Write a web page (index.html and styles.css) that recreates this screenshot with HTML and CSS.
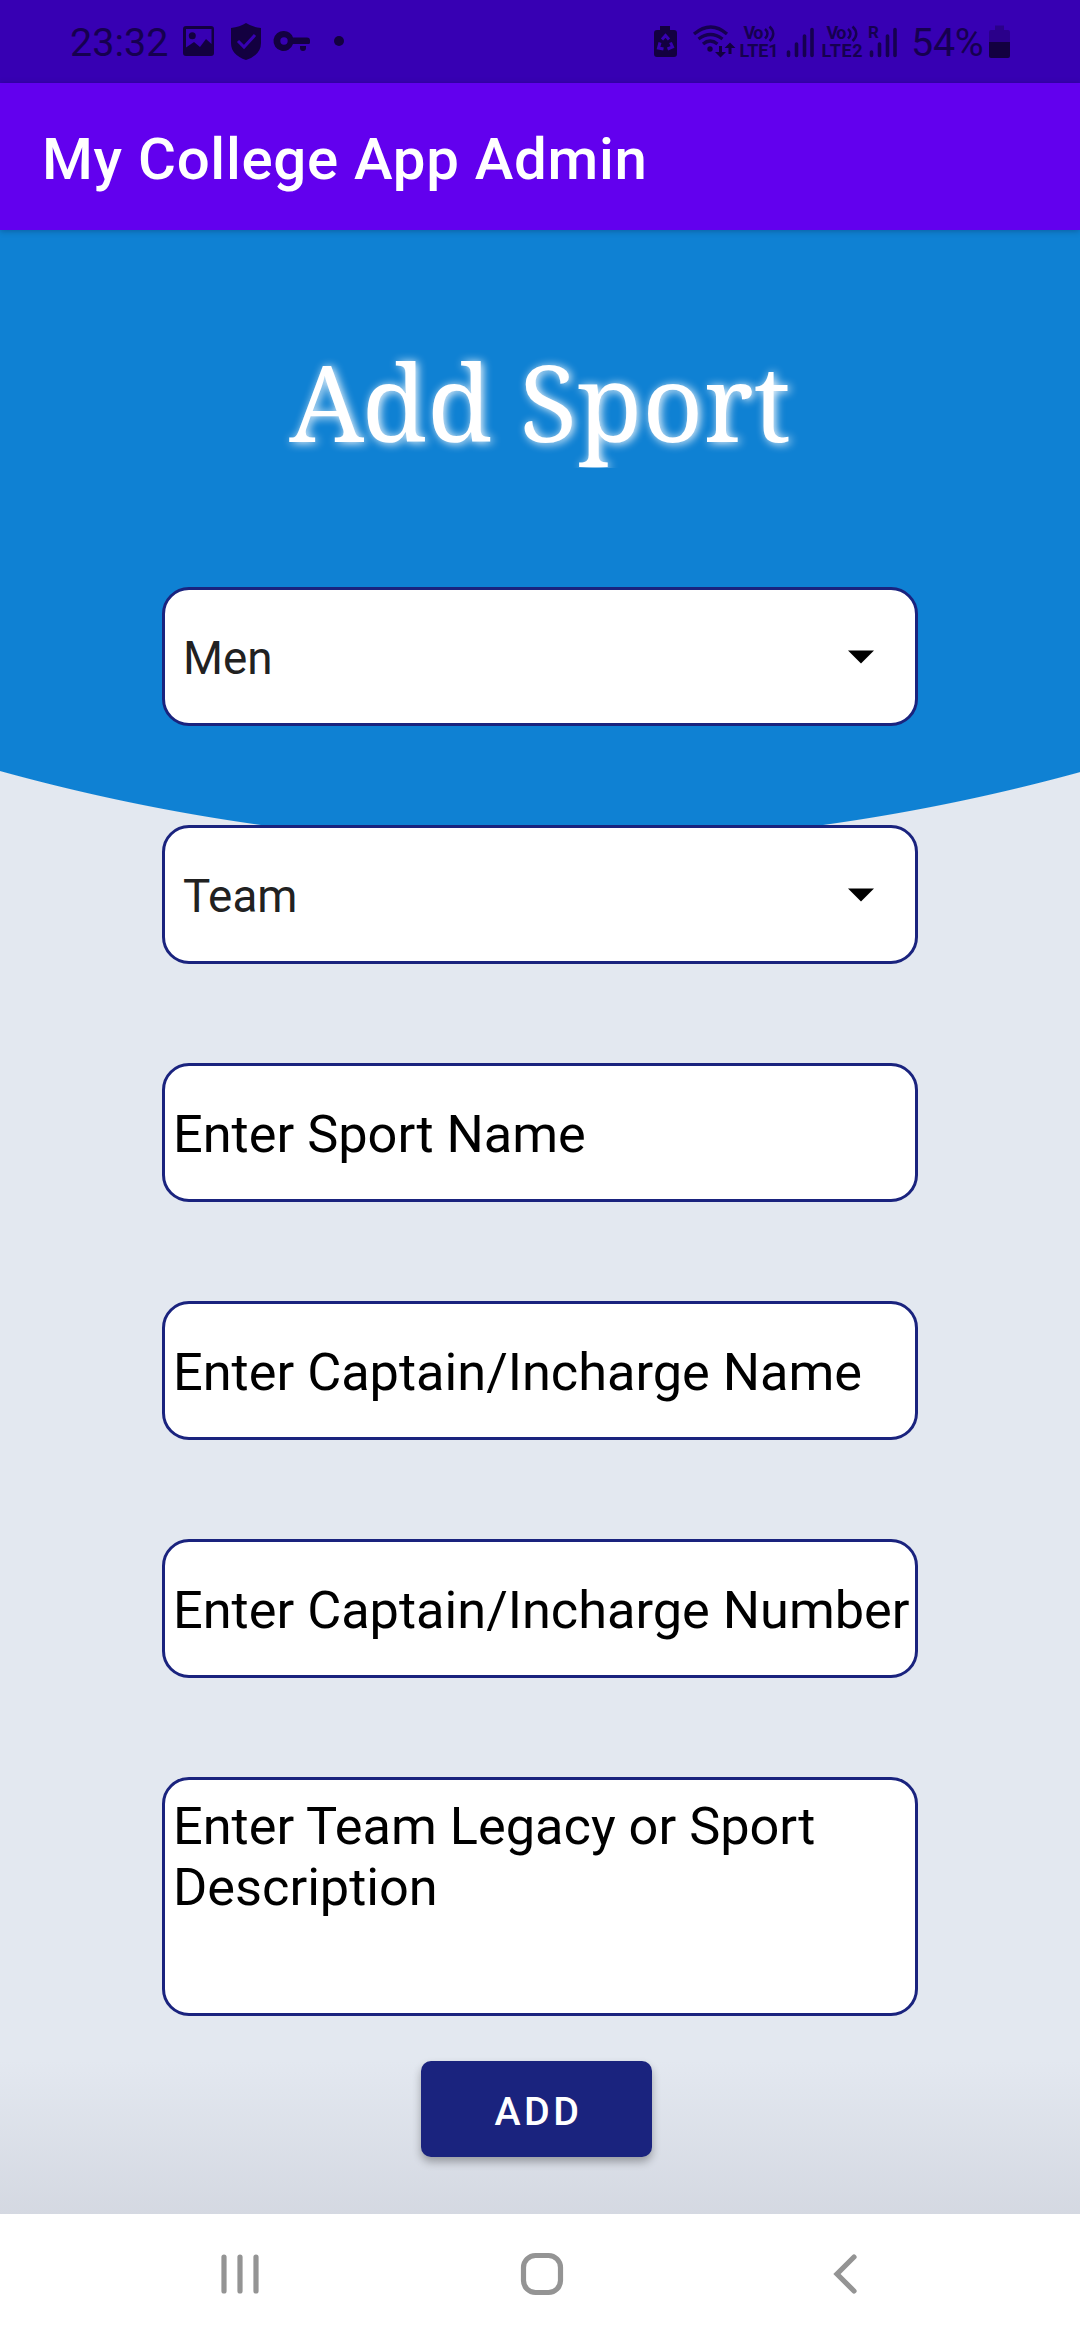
FILE: index.html
```html
<!DOCTYPE html>
<html lang="en">
<head>
<meta charset="utf-8">
<title>My College App Admin</title>
<link rel="stylesheet" href="styles.css">
</head>
<body>
<header class="status">
  <div class="status-group">
    <span class="status-text">23:32</span>
    <svg class="status-icons" width="168" height="83" viewBox="180 0 168 83">
      <path fill-rule="evenodd" d="M186 26h25q3 0 3 3v24q0 3-3 3h-25q-3 0-3-3V29q0-3 3-3zm0 3v18.500l8-5.500 6 5 6-8 5.500 5V29z"/>
      <circle cx="192.300" cy="35.800" r="3.500"/>
      <path d="M246 23q6 4 15 5v15q0 12-15 17q-15-5-15-17V28q9-1 15-5z"/>
      <path class="cut" d="M238 41l6 6 11-12"/>
      <path fill-rule="evenodd" d="M284 31a10 10 0 0 1 9 6.500h14a3 3 0 0 1 3 3v2q0 1.500-1.500 1.500H293a10 10 0 1 1-9-13zm0 6.300a3.700 3.700 0 1 0 0 7.400 3.700 3.700 0 0 0 0-7.400z"/>
      <path d="M300 46h6v2q0 3-3 3t-3-3z"/>
      <circle cx="339" cy="41" r="5"/>
    </svg>
  </div>
  <div class="status-group">
    <svg class="status-icons" width="252" height="83" viewBox="650 0 252 83">
      <path d="M660 26h10v4h4q3 0 3 3v21q0 3-3 3h-17q-3 0-3-3V33q0-3 3-3h3z"/>
      <path class="recycle" d="M662 39.500l3.500-4 3.500 4M670.500 42.500l2 4.500-5 2M663.500 49l-5-1 1.500-5.500"/>
      <g class="wave"><path d="M694 34q17-14 33 0M698.500 39q12-9 24 0M703 44q7-6 14.500 0"/></g>
      <circle cx="710" cy="49" r="2.700"/>
      <path d="M719 46h3v6h4l-5.500 5.500L715 52h4zM728.500 54h3v-6h4L730 42.500 724.500 48h4z"/>
      <text class="net" x="743.500" y="39" textLength="20">Vo</text>
      <path class="sound" d="M765 29q5 4.500 0 9.500M769.500 26.500q7.500 7 0 14.500"/>
      <text class="net" x="739.500" y="57" textLength="39">LTE1</text>
      <path class="bar" d="M788.500 52v3.500M796.500 44v11.500M804.500 36v19.500M812 29.500v26"/>
      <text class="net" x="826.500" y="39" textLength="20">Vo</text>
      <path class="sound" d="M848 29q5 4.500 0 9.500M852.500 26.500q7.500 7 0 14.500"/>
      <text class="net" x="821.500" y="57" textLength="41">LTE2</text>
      <text class="net roam" x="868" y="38">R</text>
      <path class="bar" d="M871.500 52v3.500M879.500 44v11.500M887.500 36v19.500M895 29.500v26"/>
    </svg>
    <span class="status-text percent">54%</span>
    <svg class="status-icons" width="24" height="83" viewBox="988 0 24 83">
      <path opacity=".35" d="M995 25.500h9V30h4q2 0 2 2v10h-21V32q0-2 2-2h4z"/>
      <path d="M989 42h21v14q0 2-2 2h-17q-2 0-2-2z"/>
    </svg>
  </div>
</header>
<div class="appbar">My College App Admin</div>
<main class="page">
  <h1 class="title">Add Sport</h1>
  <form class="form">
    <div class="field select"><span>Men</span><svg width="26" height="14" viewBox="0 0 26 14"><path d="M0 .5h26L13 13.500z"/></svg></div>
    <div class="field select"><span>Team</span><svg width="26" height="14" viewBox="0 0 26 14"><path d="M0 .5h26L13 13.500z"/></svg></div>
    <div class="field">Enter Sport Name</div>
    <div class="field">Enter Captain/Incharge Name</div>
    <div class="field">Enter Captain/Incharge Number</div>
    <div class="field area">Enter Team Legacy or Sport Description</div>
  </form>
  <button class="add" type="button">ADD</button>
</main>
<nav class="nav">
  <svg width="40" height="44" viewBox="0 0 40 44"><path d="M4 5v34M20 5v34M36 5v34"/></svg>
  <svg class="home" width="44" height="44" viewBox="0 0 44 44"><rect x="3.500" y="3.500" width="37" height="37" rx="12"/></svg>
  <svg width="24" height="44" viewBox="0 0 24 44"><path d="M21 5L4 22l17 17"/></svg>
</nav>
</body>
</html>
```
FILE: styles.css
```css
* { box-sizing: border-box; }

body {
  margin: 0;
  width: 1080px;
  height: 2340px;
  display: flex;
  flex-direction: column;
  overflow: hidden;
  font-family: Roboto, sans-serif;
  background: #fff;
}

.status {
  height: 83px;
  flex: none;
  padding: 0 68px 0 70px;
  display: flex;
  justify-content: space-between;
  background: #3700b3;
  color: #160050;
}

.status-group { display: flex; align-items: center; }
.status-text { width: 110px; font-size: 39.500px; line-height: 46px; padding-top: 3px; white-space: nowrap; }
.percent { width: 86px; padding-left: 9px; letter-spacing: -0.300px; }
.status-icons { display: block; fill: #130040; }
.cut { fill: none; stroke: #3700b3; stroke-width: 3; }
.recycle { fill: none; stroke: #3700b3; stroke-width: 3; }
.wave, .sound, .bar { fill: none; stroke: #160050; stroke-width: 3.300; }
.sound { stroke-width: 2.500; }
.bar { stroke-width: 3.600; stroke-linecap: round; }
.net { font: 700 18px Roboto, sans-serif; fill: #160050; }
.roam { font-size: 17px; }

.appbar {
  height: 147px;
  flex: none;
  padding-left: 42px;
  line-height: 152px;
  font-size: 58.200px;
  font-weight: 500;
  letter-spacing: 0.700px;
  color: #fff;
  background: #6200ee;
  box-shadow: 0 1px 6px rgba(0, 0, 0, 0.250);
  z-index: 1;
}

.page {
  flex: 1;
  display: flex;
  flex-direction: column;
  align-items: center;
  background:
    linear-gradient(rgba(190, 193, 204, 0) 1830px, rgba(190, 193, 204, 0.400) 1984px),
    radial-gradient(circle at 542px -1421px, #0f81d3 2035px, #e3e8f0 2036px);
}

.title {
  margin: 91px 0 0;
  height: 160px;
  line-height: 160px;
  font-family: "Noto Serif", "Droid Serif", "DejaVu Serif Condensed", "DejaVu Serif", serif;
  font-size: 106px;
  font-weight: 400;
  white-space: nowrap;
  color: #fff;
  text-shadow: 2px 1px 10px #fff;
  /* the glow stops just under the descender */
  clip-path: inset(0 -20px 13px);
}

.form {
  margin-top: 106px;
  width: 756px;
  display: flex;
  flex-direction: column;
  gap: 99px;
}

.field {
  height: 139px;
  padding: 3px 0 0 8px;
  border: 3px solid #1a237e;
  border-radius: 27px;
  background: #fff;
  color: #000;
  font-size: 52.300px;
  line-height: 131px;
  white-space: nowrap;
}

.select {
  padding: 0 41px 0 18px;
  display: flex;
  align-items: center;
  justify-content: space-between;
  font-size: 45.800px;
  color: #212121;
}

.select span { padding-top: 3px; }

.area {
  height: 239px;
  padding-top: 16px;
  line-height: 61px;
  white-space: normal;
}

.add {
  width: 231px;
  height: 96px;
  margin: 45px 7px 0 0;
  padding: 4px 0 0 4px;
  border: 0;
  border-radius: 10px;
  background: #1a237e;
  color: #fff;
  font: 500 39.400px Roboto, sans-serif;
  letter-spacing: 3.500px;
  box-shadow: 0 5px 8px rgba(0, 0, 0, 0.3);
}

.nav {
  height: 126px;
  flex: none;
  padding: 0 223px 6px 220px;
  display: flex;
  align-items: center;
  justify-content: space-between;
  background: #fff;
}

.nav svg { fill: none; stroke: #949494; stroke-width: 5.200; stroke-linecap: round; }
.nav .home { margin-right: 9px; }
```
